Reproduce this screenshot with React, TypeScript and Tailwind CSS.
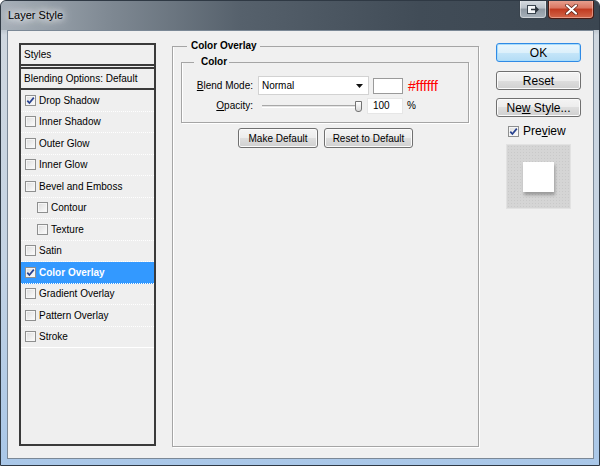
import type { ReactNode } from 'react'

interface StyleRow {
  label: string
  checked?: boolean
  indent?: boolean
  selected?: boolean
}

const styleRows: StyleRow[] = [
  { label: 'Drop Shadow', checked: true },
  { label: 'Inner Shadow' },
  { label: 'Outer Glow' },
  { label: 'Inner Glow' },
  { label: 'Bevel and Emboss' },
  { label: 'Contour', indent: true },
  { label: 'Texture', indent: true },
  { label: 'Satin' },
  { label: 'Color Overlay', checked: true, selected: true },
  { label: 'Gradient Overlay' },
  { label: 'Pattern Overlay' },
  { label: 'Stroke' },
]

function Checkbox({ checked }: { checked?: boolean }) {
  return (
    <span className="flex h-[11px] w-[11px] shrink-0 items-center justify-center border border-[#8e8f8f] bg-[linear-gradient(135deg,#dcdcdc,#fdfdfd)] shadow-[inset_0_0_0_1px_#f6f6f6]">
      {checked && (
        <svg width="9" height="9" viewBox="0 0 9 9">
          <path d="M1.3 4.6 L3.4 7 L7.8 1.6" fill="none" stroke="#27418f" strokeWidth="1.7" />
        </svg>
      )}
    </span>
  )
}

function WinButton({
  children,
  primary,
  className,
}: {
  children: ReactNode
  primary?: boolean
  className: string
}) {
  return (
    <button
      className={`flex items-center justify-center rounded-[3px] border text-black ${
        primary
          ? 'border-[#2f8ae5] bg-[linear-gradient(180deg,#eaf6fd_0%,#dcf0fb_50%,#c6e6f9_50%,#b3dcf5_100%)] shadow-[inset_0_0_0_1px_#a8dcfb]'
          : 'border-[#707070] bg-[linear-gradient(180deg,#f4f4f4_0%,#ececec_50%,#dedede_50%,#d0d0d0_100%)] shadow-[inset_0_0_0_1px_#fbfbfb]'
      } ${className}`}
    >
      {children}
    </button>
  )
}

function StylesList() {
  return (
    <div className="mt-[12px] flex h-[403px] w-[137px] shrink-0 flex-col border-2 border-[#3a3a3a] bg-[#efefef] text-[10px] text-black">
      <div className="flex h-[21px] items-center border-b-2 border-[#3a3a3a] pl-[3px]">Styles</div>
      <div className="mt-[1px] flex h-[23px] items-center border-y-2 border-[#3a3a3a] pl-[3px]">
        Blending Options: Default
      </div>
      {styleRows.map((row, i) => (
        <div
          key={row.label}
          className={`flex h-[21.5px] items-center gap-[3px] border-b border-white ${
            i === styleRows.length - 1 ? 'border-solid' : 'border-dotted'
          } ${row.indent ? 'pl-[16px]' : 'pl-[4px]'} ${
            row.selected ? 'bg-[#3399ff] font-bold text-white' : ''
          }`}
        >
          <Checkbox checked={row.checked} />
          <span>{row.label}</span>
        </div>
      ))}
    </div>
  )
}

function ColorOverlayPanel() {
  return (
    <fieldset className="mt-[9px] ml-[16px] h-[407px] w-[307px] shrink-0 border border-[#a5a5a5] px-[8px] shadow-[1px_1px_0_#fff,inset_1px_0_0_#fff] text-[10px] text-black">
      <legend className="ml-[6px] pr-[3px] pl-[4px] text-[10px] leading-[12px] font-bold">Color Overlay</legend>
      <fieldset className="mt-[4px] w-[288px] border border-[#a5a5a5] pb-[8px] shadow-[1px_1px_0_#fff,inset_1px_0_0_#fff]">
        <legend className="ml-[12px] pr-[2px] pl-[7px] text-[10px] leading-[12px] font-bold">Color</legend>
        <div className="pt-[8px]">
          <div className="flex h-[19px] items-center">
            <span className="w-[71px] text-right">
              <span className="underline">B</span>lend Mode:
            </span>
            <div className="ml-[5px] flex h-[19px] w-[111px] items-center justify-between border border-[#d2d2d2] bg-white pr-[5px] pl-[3px]">
              <span>Normal</span>
              <svg width="7" height="4" viewBox="0 0 7 4">
                <path d="M0 0 H7 L3.5 4 Z" fill="#111" />
              </svg>
            </div>
            <div className="ml-[4px] h-[16px] w-[30px] border border-[#9a9a9a] bg-white" />
            <span className="ml-[5px] text-[14px] leading-none text-[#ff0000]">#ffffff</span>
          </div>
          <div className="mt-[2px] flex h-[17px] items-center">
            <span className="w-[71px] text-right">
              <span className="underline">O</span>pacity:
            </span>
            <div className="relative ml-[9px] h-[17px] w-[100px]">
              <div className="absolute top-[8px] right-[4px] left-0 h-[3px] border-y border-t-[#a8a8a8] border-b-white bg-[#e4e4e4]" />
              <div className="absolute top-[4px] left-[93px] h-[11px] w-[7px] rounded-b-[3px] border border-[#737373] bg-[linear-gradient(180deg,#ffffff,#d8d8d8)]" />
            </div>
            <div className="ml-[5px] flex h-[16px] w-[36px] items-center border border-[#e6e6e6] bg-white pl-[5px]">100</div>
            <span className="ml-[4px]">%</span>
          </div>
        </div>
      </fieldset>
      <div className="mt-[5px] flex justify-center gap-[6px]">
        <WinButton className="h-[20px] w-[80px] text-[10px]">Make Default</WinButton>
        <WinButton className="h-[20px] w-[89px] text-[10px]">Reset to Default</WinButton>
      </div>
    </fieldset>
  )
}

function ActionColumn() {
  return (
    <div className="mt-[12px] ml-[17px] flex w-[85px] shrink-0 flex-col items-center text-[12px] text-black">
      <WinButton primary className="h-[19px] w-full">
        OK
      </WinButton>
      <WinButton className="mt-[9px] h-[19px] w-full">Reset</WinButton>
      <WinButton className="mt-[8px] h-[19px] w-full">
        Ne<span className="underline">w</span>&nbsp;Style...
      </WinButton>
      <div className="mt-[7px] flex h-[14px] w-full items-center gap-[4px] pl-[12px]">
        <Checkbox checked />
        <span>
          Pre<span className="underline">v</span>iew
        </span>
      </div>
      <div className="mt-[6px] flex h-[65px] w-[65px] items-center justify-center border border-[#e2e2e2] bg-[#d5d5d5] bg-[radial-gradient(#c9c9c9_0.6px,transparent_0.8px)] bg-[length:3px_3px]">
        <div className="mt-[1px] h-[30px] w-[31px] bg-white shadow-[1px_3px_3px_rgba(0,0,0,0.28)]" />
      </div>
    </div>
  )
}

export default function App() {
  return (
    <div className="flex h-[466px] w-[600px] flex-col overflow-hidden rounded-t-[6px] border border-[#2f3944] bg-[linear-gradient(180deg,#5d6873_0px,#cfd7df_34px,#c4d3e3_55%,#a9c7e8_100%)] font-['Liberation_Sans',Arial,sans-serif]">
      <div className="flex h-[29px] shrink-0 justify-between bg-[linear-gradient(90deg,#a7b0b9_0%,#7f8993_18%,#56616c_40%,#414c57_70%,#3b4651_100%)]">
        <span className="pt-[8px] pl-[7px] text-[11px] leading-[13px] text-black [text-shadow:0_0_6px_#fff,0_0_10px_#fff,0_0_14px_#e6eaee]">
          Layer Style
        </span>
        <div className="-mt-[1px] mr-[5px] flex gap-[1px]">
          <div className="flex h-[19px] w-[28px] items-center justify-center rounded-b-[4px] border border-t-0 border-[#3a444e] bg-[linear-gradient(180deg,#d9dee3_0%,#b9c1c9_45%,#8e98a2_50%,#a7b1ba_100%)] shadow-[inset_0_0_0_1px_rgba(255,255,255,0.45)]">
            <svg width="14" height="11" viewBox="0 0 14 11">
              <rect x="1.5" y="1.5" width="8" height="8" fill="#f4f6f8" stroke="#3b4650" />
              <path d="M5 5.5 H12 M9.5 3 L12 5.5 L9.5 8" fill="none" stroke="#2b333b" strokeWidth="1.4" />
            </svg>
          </div>
          <div className="flex h-[19px] w-[46px] items-center justify-center rounded-b-[4px] border border-t-0 border-[#4a1a12] bg-[linear-gradient(180deg,#e8a493_0%,#d97560_45%,#c0391f_50%,#d2664a_100%)] shadow-[inset_0_0_0_1px_rgba(255,220,210,0.45)]">
            <svg width="13" height="11" viewBox="0 0 13 11">
              <path d="M2 1.5 L11 9.5 M11 1.5 L2 9.5" stroke="#5a2015" strokeWidth="3.6" strokeLinecap="round" />
              <path d="M2 1.5 L11 9.5 M11 1.5 L2 9.5" stroke="#ffffff" strokeWidth="2.2" strokeLinecap="round" />
            </svg>
          </div>
        </div>
      </div>
      <div className="mr-[5px] mb-[6px] ml-[6px] flex flex-1 border border-[#7b8896] bg-[#f0f0f0] pl-[11px]">
        <StylesList />
        <ColorOverlayPanel />
        <ActionColumn />
      </div>
    </div>
  )
}
